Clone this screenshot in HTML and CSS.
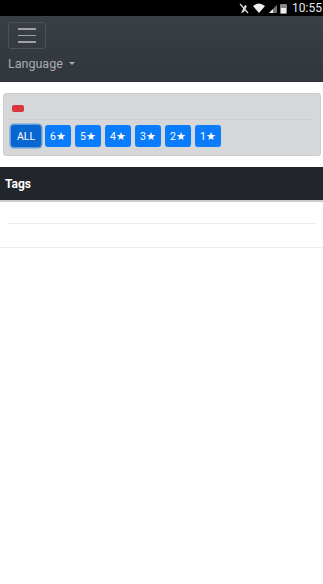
FILE: index.html
```html
<!DOCTYPE html>
<html>
<head>
<meta charset="utf-8">
<link rel="stylesheet" href="styles.css">
</head>
<body>
<div class="statusbar">
  <span class="sb-icons">
    <svg width="10" height="11" viewBox="0 0 10 11"><path d="M2 10 L6 2 L8 3 L5 9 Z" fill="#ddd"/><path d="M1 1 L9 10" stroke="#ddd" stroke-width="1.2"/></svg>
    <svg width="14" height="11" viewBox="0 0 14 11"><path d="M1 3 Q7 -2 13 3 L7 10 Z" fill="#eee"/></svg>
    <svg width="8" height="11" viewBox="0 0 8 11"><path d="M0 10 L8 2 L8 10 Z" fill="#777"/><path d="M0 10 L4 6 L4 10 Z" fill="#eee"/></svg>
    <svg width="7" height="11" viewBox="0 0 7 11"><rect x="0" y="1" width="7" height="10" rx="1" fill="#888"/><rect x="1" y="5" width="5" height="5" fill="#eee"/></svg>
    <span class="sb-time">10:55</span>
  </span>
</div>
<nav class="navbar">
  <button class="toggler"><span class="bar"></span><span class="bar"></span><span class="bar"></span></button>
  <div class="lang">Language <span class="caret"></span></div>
</nav>
<div class="panel">
  <div class="badge"></div>
  <div class="rule"></div>
  <div class="btns">
    <button class="btn active">ALL</button>
    <button class="btn">6★</button>
    <button class="btn">5★</button>
    <button class="btn">4★</button>
    <button class="btn">3★</button>
    <button class="btn">2★</button>
    <button class="btn">1★</button>
  </div>
</div>
<div class="tags-head">Tags</div>
<div class="tags-body"><div class="inner-rule"></div></div>
</body>
</html>
```
FILE: styles.css
```css
* { box-sizing: border-box; }
html, body { margin: 0; padding: 0; background: #fff; }
body { font-family: Roboto, "Noto Sans", sans-serif; width: 323px; height: 584px; overflow: hidden; }
.statusbar { height: 16px; background: #000; display: flex; justify-content: flex-end; align-items: center; padding-right: 1px; }
.sb-icons { display: flex; align-items: center; gap: 3px; }
.sb-time { color: #e8e8e8; font-size: 12px; margin-left: 2px; }
.navbar { height: 66px; background: linear-gradient(#3a3f46, #31363c); padding: 6px 8px 0; display: flex; flex-direction: column; align-items: flex-start; }
.toggler { width: 38px; height: 27px; border: 1px solid #4d535a; border-radius: 3px; background: transparent; display: flex; flex-direction: column; justify-content: center; align-items: center; gap: 5px; padding: 0; }
.bar { display: block; width: 18px; height: 1.5px; background: #9ea2a6; }
.lang { margin-top: 7px; color: #a9adb1; font-size: 12.5px; display: flex; align-items: center; }
.caret { display: inline-block; margin-left: 6px; border-left: 3px solid transparent; border-right: 3px solid transparent; border-top: 3px solid #a9adb1; }
.panel { margin: 11px 2px 0 3px; height: 63px; background: #d6d7d9; border: 1px solid #cbcccf; border-radius: 3px; padding: 11px 7px 0 7px; }
.badge { width: 12px; height: 7px; background: #d9363e; border-radius: 2px; margin-left: 1px; }
.rule { height: 1px; background: #cdced0; margin-top: 7px; }
.btns { display: flex; gap: 4px; margin-top: 5px; }
.btn { height: 22px; width: 26px; padding: 0; border: 0; border-radius: 3px; background: #0a7bfa; color: #fff; font-family: Roboto, sans-serif; font-size: 10.5px; }
.btn.active { width: 30px; margin-right: 0; background: #0766cf; box-shadow: 0 0 0 1.5px #5f9de0; }
.tags-head { margin-top: 11px; height: 35px; background: #22262b; border-bottom: 2px solid #c9cbce; color: #fff; font-weight: bold; font-size: 12px; padding-left: 5px; display: flex; align-items: center; }
.tags-body { height: 46px; border-bottom: 1px solid #eeeeee; padding: 21px 7px 0 8px; }
.inner-rule { height: 1px; background: #ececec; }
```
